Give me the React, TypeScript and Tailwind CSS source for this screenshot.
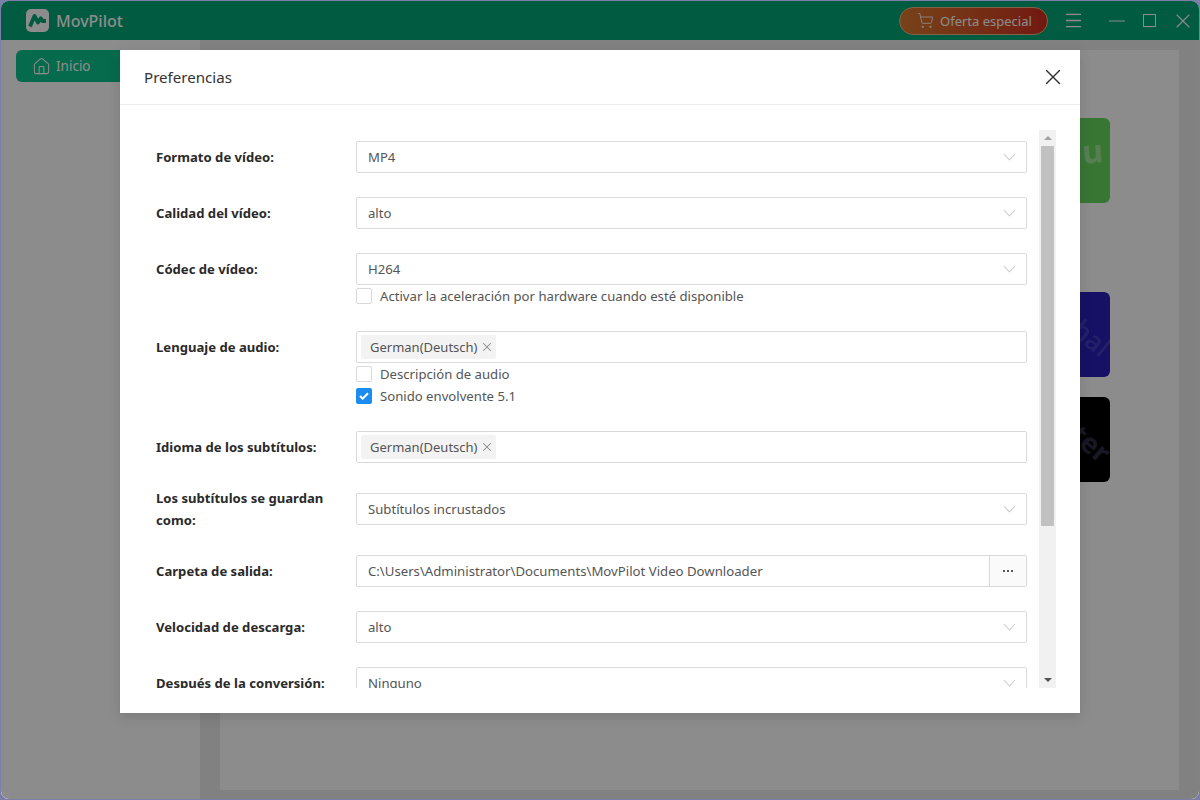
import { ReactNode } from "react";
import { ShoppingCart, Menu, Home, Minus, X } from "lucide-react";

const font = { fontFamily: '"Noto Sans", "Open Sans", sans-serif' };

function Chevron() {
  return (
    <svg width="13" height="8" viewBox="0 0 13 8" fill="none" className="shrink-0">
      <path d="M1 1l5.5 6L12 1" stroke="#cccccc" strokeWidth="1.1" />
    </svg>
  );
}

function Select({ value }: { value: string }) {
  return (
    <div className="h-8 flex items-center justify-between border border-[#d9d9d9] rounded-[2px] pl-[11px] pr-[10px] text-[13.15px] text-[#555555] bg-white">
      <span className="pt-[2px]">{value}</span>
      <Chevron />
    </div>
  );
}

function Tag() {
  return (
    <div className="h-8 flex items-center border border-[#d9d9d9] rounded-[2px] pl-1 bg-white">
      <span className="w-[135px] h-6 flex items-center gap-[2px] bg-[#f3f3f3] rounded-[2px] pl-[9px] text-[13px] text-[#555555]">
        <span className="pt-[1px]">German(Deutsch)</span>
        <X size={14} strokeWidth={1.8} className="text-[#8c8c8c]" />
      </span>
    </div>
  );
}

function Check({ label, checked }: { label: string; checked?: boolean }) {
  return (
    <div className="h-[22px] flex items-center gap-2 text-[13.15px] text-[#555555]">
      {checked ? (
        <span className="w-4 h-4 rounded-[2px] bg-[#1c8cf0] flex items-center justify-center">
          <svg width="10" height="8" viewBox="0 0 10 8" fill="none">
            <path d="M1 4l2.7 2.7L9 1.2" stroke="#fff" strokeWidth="2" />
          </svg>
        </span>
      ) : (
        <span className="w-4 h-4 rounded-[2px] border border-[#d9d9d9] bg-white" />
      )}
      <span className="pt-[2px]">{label}</span>
    </div>
  );
}

function Row({ label, children, center }: { label: string; children: ReactNode; center?: boolean }) {
  return (
    <div className={`flex ${center ? "items-center" : "items-start"}`}>
      <div className="w-[200px] shrink-0 min-h-8 flex items-center pr-5 text-[13.1px] leading-[22px] font-bold text-[#2a2a2a]">
        {label}
      </div>
      <div className="flex-1 min-w-0">{children}</div>
    </div>
  );
}

function Card({ bg, children }: { bg: string; children: ReactNode }) {
  return <div className={`w-[85px] h-[85px] rounded-md relative overflow-hidden ${bg}`}>{children}</div>;
}

export default function App() {
  return (
    <div className="w-[1200px] h-[800px] bg-[#7e7ca8] p-[1px] overflow-hidden" style={font}>
      <div className="relative w-full h-full rounded-lg overflow-hidden flex flex-col bg-white">
        <header className="h-[39px] shrink-0 bg-[#00a776] flex items-center">
          <div className="flex items-center pl-[25px]">
            <svg width="23" height="23" viewBox="0 0 23 23">
              <rect width="23" height="23" rx="5" fill="#ffffff" />
              <path d="M4 17.5L8.5 7l3.5 6.5 2.8-4.2 1.7 2.7H20" fill="none" stroke="#00a776" strokeWidth="3.8" strokeLinejoin="round" />
            </svg>
            <span className="ml-[7px] text-[16px] font-medium leading-none text-white">MovPilot</span>
          </div>
          <div className="ml-auto flex items-center">
            <button className="w-[149px] h-7 rounded-full border border-[#f0b080] bg-gradient-to-r from-[#d9792e] to-[#cf2b20] flex items-center pl-[17px] gap-[6px] text-[13px] text-white">
              <ShoppingCart size={17} strokeWidth={1.2} />
              <span className="pt-[2px]">Oferta especial</span>
            </button>
            <Menu size={21} strokeWidth={1.6} className="ml-[15px] text-white" />
            <Minus size={26} strokeWidth={1.1} className="ml-[20px] text-white" />
            <div className="ml-[13px] w-[13px] h-[13px] border border-white" />
            <X size={24} strokeWidth={1.1} className="ml-[15px] mr-[4px] text-white" />
          </div>
        </header>
        <div className="flex-1 flex min-h-0">
          <aside className="w-[199px] shrink-0 bg-white pt-[10px] pl-[15px] pr-[16px]">
            <div className="h-8 rounded-md bg-[#0ac48a] flex items-center pl-[16px] gap-[5px] text-[13.5px] text-white">
              <Home size={19} strokeWidth={1.3} />
              <span>Inicio</span>
            </div>
          </aside>
          <main className="flex-1 bg-[#ececec] pt-[10px] px-5 pb-[9px] min-w-0">
            <div className="h-full bg-white flex flex-col items-end pr-[69px] pt-[68px]">
              <Card bg="bg-[#66d860]">
                <span className="absolute right-[7px] top-[17px] text-[32px] font-bold leading-none rotate-[-5deg] text-white/40">u</span>
              </Card>
              <div className="h-[89px] shrink-0" />
              <Card bg="bg-[#2a20b8]">
                <span className="absolute right-[-2px] top-[32px] text-[27px] font-medium leading-none rotate-[40deg] text-white/15">hal</span>
              </Card>
              <div className="h-5 shrink-0" />
              <Card bg="bg-black">
                <span className="absolute right-[-4px] top-[28px] text-[28px] font-bold leading-none rotate-[40deg] text-[#8080c0]/35">tter</span>
              </Card>
            </div>
          </main>
        </div>

        <div className="absolute inset-0 bg-black/45" />

        <div className="absolute left-[119px] top-[49px] w-[960px] h-[663px] bg-white flex flex-col shadow-[0_4px_12px_rgba(0,0,0,0.12)]">
          <div className="h-[55px] shrink-0 border-b border-[#eeeeee] flex items-center justify-between pl-6 pr-[14px]">
            <span className="text-[15.1px] text-[#333333]">Preferencias</span>
            <X size={26} strokeWidth={1.3} className="text-[#333333]" />
          </div>
          <div className="mt-[25px] h-[558px] flex pl-9 pr-6">
            <div className="flex-1 min-w-0 overflow-hidden pt-[11px] flex flex-col gap-6">
              <Row label="Formato de vídeo:"><Select value="MP4" /></Row>
              <Row label="Calidad del vídeo:"><Select value="alto" /></Row>
              <Row label="Códec de vídeo:">
                <Select value="H264" />
                <Check label="Activar la aceleración por hardware cuando esté disponible" />
              </Row>
              <Row label="Lenguaje de audio:">
                <Tag />
                <Check label="Descripción de audio" />
                <Check label="Sonido envolvente 5.1" checked />
              </Row>
              <Row label="Idioma de los subtítulos:"><Tag /></Row>
              <Row label="Los subtítulos se guardan como:" center><Select value="Subtítulos incrustados" /></Row>
              <Row label="Carpeta de salida:">
                <div className="h-8 flex border border-[#d9d9d9] rounded-[2px] text-[13.2px] text-[#555555]">
                  <div className="flex-1 flex items-center pl-[11px] pt-[2px]">C:\Users\Administrator\Documents\MovPilot Video Downloader</div>
                  <div className="w-[37px] border-l border-[#d9d9d9] bg-[#fafafa] flex items-center justify-center gap-[2px]">
                    <span className="w-[2px] h-[2px] rounded-full bg-[#222222]" />
                    <span className="w-[2px] h-[2px] rounded-full bg-[#222222]" />
                    <span className="w-[2px] h-[2px] rounded-full bg-[#222222]" />
                  </div>
                </div>
              </Row>
              <Row label="Velocidad de descarga:"><Select value="alto" /></Row>
              <Row label="Después de la conversión:"><Select value="Ninguno" /></Row>
            </div>
            <div className="ml-3 w-[17px] shrink-0 bg-[#f1f1f1] flex flex-col">
              <div className="h-4 flex items-center justify-center">
                <svg width="8" height="4" viewBox="0 0 8 4"><path d="M0 4l4-4 4 4z" fill="#a3a3a3" /></svg>
              </div>
              <div className="h-[380px] mx-[2px] bg-[#c1c1c1]" />
              <div className="flex-1" />
              <div className="h-4 flex items-center justify-center">
                <svg width="8" height="4" viewBox="0 0 8 4"><path d="M0 0l4 4 4-4z" fill="#505050" /></svg>
              </div>
            </div>
          </div>
        </div>
      </div>
    </div>
  );
}
